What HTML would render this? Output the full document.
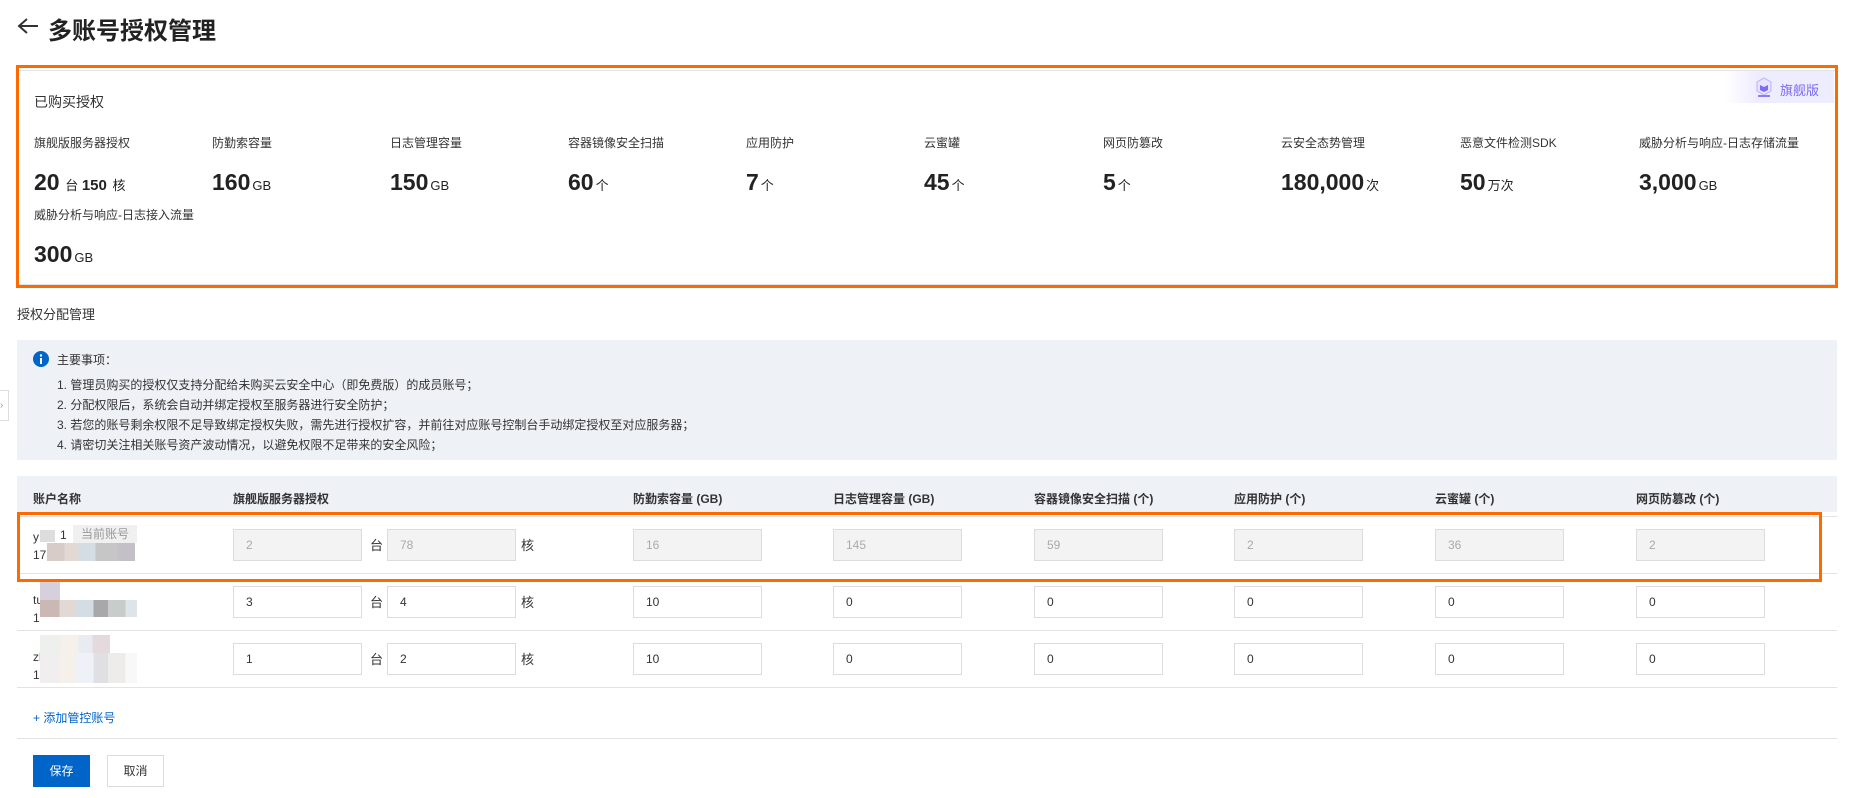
<!DOCTYPE html>
<html><head><meta charset="utf-8"><style>
*{margin:0;padding:0;box-sizing:border-box}
body{width:1857px;height:798px;background:#fff;font-family:"Liberation Sans","Noto Sans CJK SC",sans-serif;color:#333;position:relative;overflow:hidden}
.a{position:absolute;white-space:nowrap}
.lbl{font-size:12px;color:#333}
.val{font-size:23px;font-weight:bold;color:#222;line-height:24px}
.val small{font-size:13px;font-weight:normal;margin-left:2px}
.th{font-size:12px;font-weight:bold;color:#333}
.in{position:absolute;width:129px;height:32px;border:1px solid #dcdcdc;font-size:12px;line-height:30px;padding-left:12px;color:#333;background:#fff}
.dis{background:#f3f3f3;color:#aaa}
.unit{position:absolute;font-size:13px;color:#333}
.blk{position:absolute}
</style></head><body>
<!-- title -->
<svg class="a" style="left:16px;top:16px" width="24" height="20" viewBox="0 0 24 20"><path d="M11 3 L3 10 L11 17 M3 10 H22" fill="none" stroke="#333" stroke-width="2"/></svg>
<div class="a" style="left:48px;top:11px;font-size:24px;font-weight:bold;color:#222">多账号授权管理</div>

<!-- purchased card -->
<div class="a" style="left:16px;top:65px;width:1822px;height:223px;border:3px solid #ff6a00"></div>
<div class="a" style="left:19px;top:70px;width:1816px;height:1px;background:#e3e3e3"></div>
<div class="a" style="left:1725px;top:71px;width:109px;height:32px;background:linear-gradient(90deg,rgba(238,236,255,0),#eeecff 30%)"></div>
<svg class="a" style="left:1755px;top:77px" width="18" height="22" viewBox="0 0 18 22"><path d="M9 1 L16 5 V14 L9 18 L2 14 V5 Z" fill="#e6e2ff" stroke="#b9b0ff"/><path d="M5 8 L9 10 L13 8 L13 13 L9 15 L5 13Z" fill="#7b6cf0"/><rect x="3" y="18" width="12" height="2" fill="#8a7cf5"/></svg>
<div class="a" style="left:1780px;top:80px;font-size:13px;color:#7a6cf0">旗舰版</div>
<div class="a" style="left:34px;top:92px;font-size:14px;color:#333">已购买授权</div>

<div class="a lbl" style="left:34px;top:134px">旗舰版服务器授权</div>
<div class="a lbl" style="left:212px;top:134px">防勤索容量</div>
<div class="a lbl" style="left:390px;top:134px">日志管理容量</div>
<div class="a lbl" style="left:568px;top:134px">容器镜像安全扫描</div>
<div class="a lbl" style="left:746px;top:134px">应用防护</div>
<div class="a lbl" style="left:924px;top:134px">云蜜罐</div>
<div class="a lbl" style="left:1103px;top:134px">网页防篡改</div>
<div class="a lbl" style="left:1281px;top:134px">云安全态势管理</div>
<div class="a lbl" style="left:1460px;top:134px">恶意文件检测SDK</div>
<div class="a lbl" style="left:1639px;top:134px">威胁分析与响应-日志存储流量</div>

<div class="a val" style="left:34px;top:170px">20<small> 台 </small><span style="font-size:15px">150</span><small> 核</small></div>
<div class="a val" style="left:212px;top:170px">160<small>GB</small></div>
<div class="a val" style="left:390px;top:170px">150<small>GB</small></div>
<div class="a val" style="left:568px;top:170px">60<small>个</small></div>
<div class="a val" style="left:746px;top:170px">7<small>个</small></div>
<div class="a val" style="left:924px;top:170px">45<small>个</small></div>
<div class="a val" style="left:1103px;top:170px">5<small>个</small></div>
<div class="a val" style="left:1281px;top:170px">180,000<small>次</small></div>
<div class="a val" style="left:1460px;top:170px">50<small>万次</small></div>
<div class="a val" style="left:1639px;top:170px">3,000<small>GB</small></div>

<div class="a lbl" style="left:34px;top:206px">威胁分析与响应-日志接入流量</div>
<div class="a val" style="left:34px;top:242px">300<small>GB</small></div>
<div class="a" style="left:19px;top:284px;width:1816px;height:1px;background:#e3e3e3"></div>

<!-- allocation -->
<div class="a" style="left:17px;top:304px;font-size:13px;color:#333">授权分配管理</div>
<div class="a" style="left:0;top:390px;width:9px;height:31px;border:1px solid #ddd;border-left:none;background:#fff;font-size:10px;color:#999;line-height:29px">›</div>
<div class="a" style="left:17px;top:340px;width:1820px;height:120px;background:#eef1f6"></div>
<svg class="a" style="left:33px;top:351px" width="16" height="16" viewBox="0 0 16 16"><circle cx="8" cy="8" r="8" fill="#0064c8"/><rect x="7" y="7" width="2" height="6" fill="#fff"/><circle cx="8" cy="4.5" r="1.2" fill="#fff"/></svg>
<div class="a" style="left:57px;top:351px;font-size:12px;color:#333">主要事项：</div>
<div class="a" style="left:57px;top:375px;font-size:12px;color:#333;line-height:20px">1. 管理员购买的授权仅支持分配给未购买云安全中心（即免费版）的成员账号；<br>2. 分配权限后，系统会自动并绑定授权至服务器进行安全防护；<br>3. 若您的账号剩余权限不足导致绑定授权失败，需先进行授权扩容，并前往对应账号控制台手动绑定授权至对应服务器；<br>4. 请密切关注相关账号资产波动情况，以避免权限不足带来的安全风险；</div>

<!-- table header -->
<div class="a" style="left:17px;top:476px;width:1820px;height:36px;background:#eef1f6"></div>
<div class="a th" style="left:33px;top:490px">账户名称</div>
<div class="a th" style="left:233px;top:490px">旗舰版服务器授权</div>
<div class="a th" style="left:633px;top:490px">防勤索容量 (GB)</div>
<div class="a th" style="left:833px;top:490px">日志管理容量 (GB)</div>
<div class="a th" style="left:1034px;top:490px">容器镜像安全扫描 (个)</div>
<div class="a th" style="left:1234px;top:490px">应用防护 (个)</div>
<div class="a th" style="left:1435px;top:490px">云蜜罐 (个)</div>
<div class="a th" style="left:1636px;top:490px">网页防篡改 (个)</div>

<!-- row1 -->
<div class="a" style="left:17px;top:516px;width:1820px;height:1px;background:#e3e3e3"></div>
<div class="a" style="left:17px;top:573px;width:1820px;height:1px;background:#e3e3e3"></div>
<div class="a" style="left:17px;top:512px;width:1805px;height:70px;border:3px solid #ff6a00"></div>
<div class="a" style="left:33px;top:530px;font-size:12px">y</div>
<div class="blk" style="left:40px;top:530px;width:15px;height:12px;background:#ddd"></div>
<div class="a" style="left:60px;top:528px;font-size:12px">1</div>
<div class="a" style="left:73px;top:525px;width:64px;height:18px;background:#f0f0f0;color:#999;font-size:12px;padding-left:8px;line-height:18px">当前账号</div>
<div class="a" style="left:33px;top:548px;font-size:12px">17</div>
<div class="blk" style="left:47px;top:543px;width:88px;height:18px;background:linear-gradient(90deg,#d8ccc8 0 20%,#e2d8d4 20% 36%,#d4dce4 36% 55%,#c6c6c6 55% 80%,#c4c0c8 80%)"></div>
<div class="in dis" style="left:233px;top:529px">2</div><div class="unit" style="left:370px;top:535px">台</div>
<div class="in dis" style="left:387px;top:529px">78</div><div class="unit" style="left:521px;top:535px">核</div>
<div class="in dis" style="left:633px;top:529px">16</div>
<div class="in dis" style="left:833px;top:529px">145</div>
<div class="in dis" style="left:1034px;top:529px">59</div>
<div class="in dis" style="left:1234px;top:529px">2</div>
<div class="in dis" style="left:1435px;top:529px">36</div>
<div class="in dis" style="left:1636px;top:529px">2</div>

<!-- row2 -->
<div class="a" style="left:33px;top:593px;font-size:12px">tu</div>
<div class="blk" style="left:40px;top:582px;width:20px;height:18px;background:#d6d0dc"></div>
<div class="a" style="left:33px;top:611px;font-size:12px">1</div>
<div class="blk" style="left:40px;top:600px;width:97px;height:17px;background:linear-gradient(90deg,#c9b8b4 0 20%,#e2d8d4 20% 36%,#d4dce4 36% 55%,#a8a8aa 55% 70%,#c8ccca 70% 88%,#dde4ea 88%)"></div>
<div class="in" style="left:233px;top:586px">3</div><div class="unit" style="left:370px;top:592px">台</div>
<div class="in" style="left:387px;top:586px">4</div><div class="unit" style="left:521px;top:592px">核</div>
<div class="in" style="left:633px;top:586px">10</div>
<div class="in" style="left:833px;top:586px">0</div>
<div class="in" style="left:1034px;top:586px">0</div>
<div class="in" style="left:1234px;top:586px">0</div>
<div class="in" style="left:1435px;top:586px">0</div>
<div class="in" style="left:1636px;top:586px">0</div>
<div class="a" style="left:17px;top:630px;width:1820px;height:1px;background:#e3e3e3"></div>

<!-- row3 -->
<div class="a" style="left:33px;top:650px;font-size:12px">zl</div>
<div class="blk" style="left:40px;top:635px;width:70px;height:18px;background:linear-gradient(90deg,#eef0ee 0 30%,#f6f0ea 30% 55%,#e8ecf2 55% 75%,#e4dade 75%)"></div>
<div class="a" style="left:33px;top:668px;font-size:12px">1</div>
<div class="blk" style="left:40px;top:653px;width:97px;height:30px;background:linear-gradient(90deg,#f0eeee 0 20%,#f6f0ea 20% 36%,#eef2f8 36% 55%,#e0e0e2 55% 70%,#eeecea 70% 88%,#f8f8f8 88%)"></div>
<div class="in" style="left:233px;top:643px">1</div><div class="unit" style="left:370px;top:649px">台</div>
<div class="in" style="left:387px;top:643px">2</div><div class="unit" style="left:521px;top:649px">核</div>
<div class="in" style="left:633px;top:643px">10</div>
<div class="in" style="left:833px;top:643px">0</div>
<div class="in" style="left:1034px;top:643px">0</div>
<div class="in" style="left:1234px;top:643px">0</div>
<div class="in" style="left:1435px;top:643px">0</div>
<div class="in" style="left:1636px;top:643px">0</div>
<div class="a" style="left:17px;top:687px;width:1820px;height:1px;background:#e3e3e3"></div>

<div class="a" style="left:33px;top:709px;font-size:12px;color:#0064c8">+ 添加管控账号</div>
<div class="a" style="left:17px;top:738px;width:1820px;height:1px;background:#e3e3e3"></div>
<div class="a" style="left:33px;top:755px;width:57px;height:32px;background:#0064c8;color:#fff;font-size:12px;text-align:center;line-height:32px">保存</div>
<div class="a" style="left:107px;top:755px;width:57px;height:32px;border:1px solid #dcdcdc;color:#333;font-size:12px;text-align:center;line-height:30px">取消</div>
</body></html>
